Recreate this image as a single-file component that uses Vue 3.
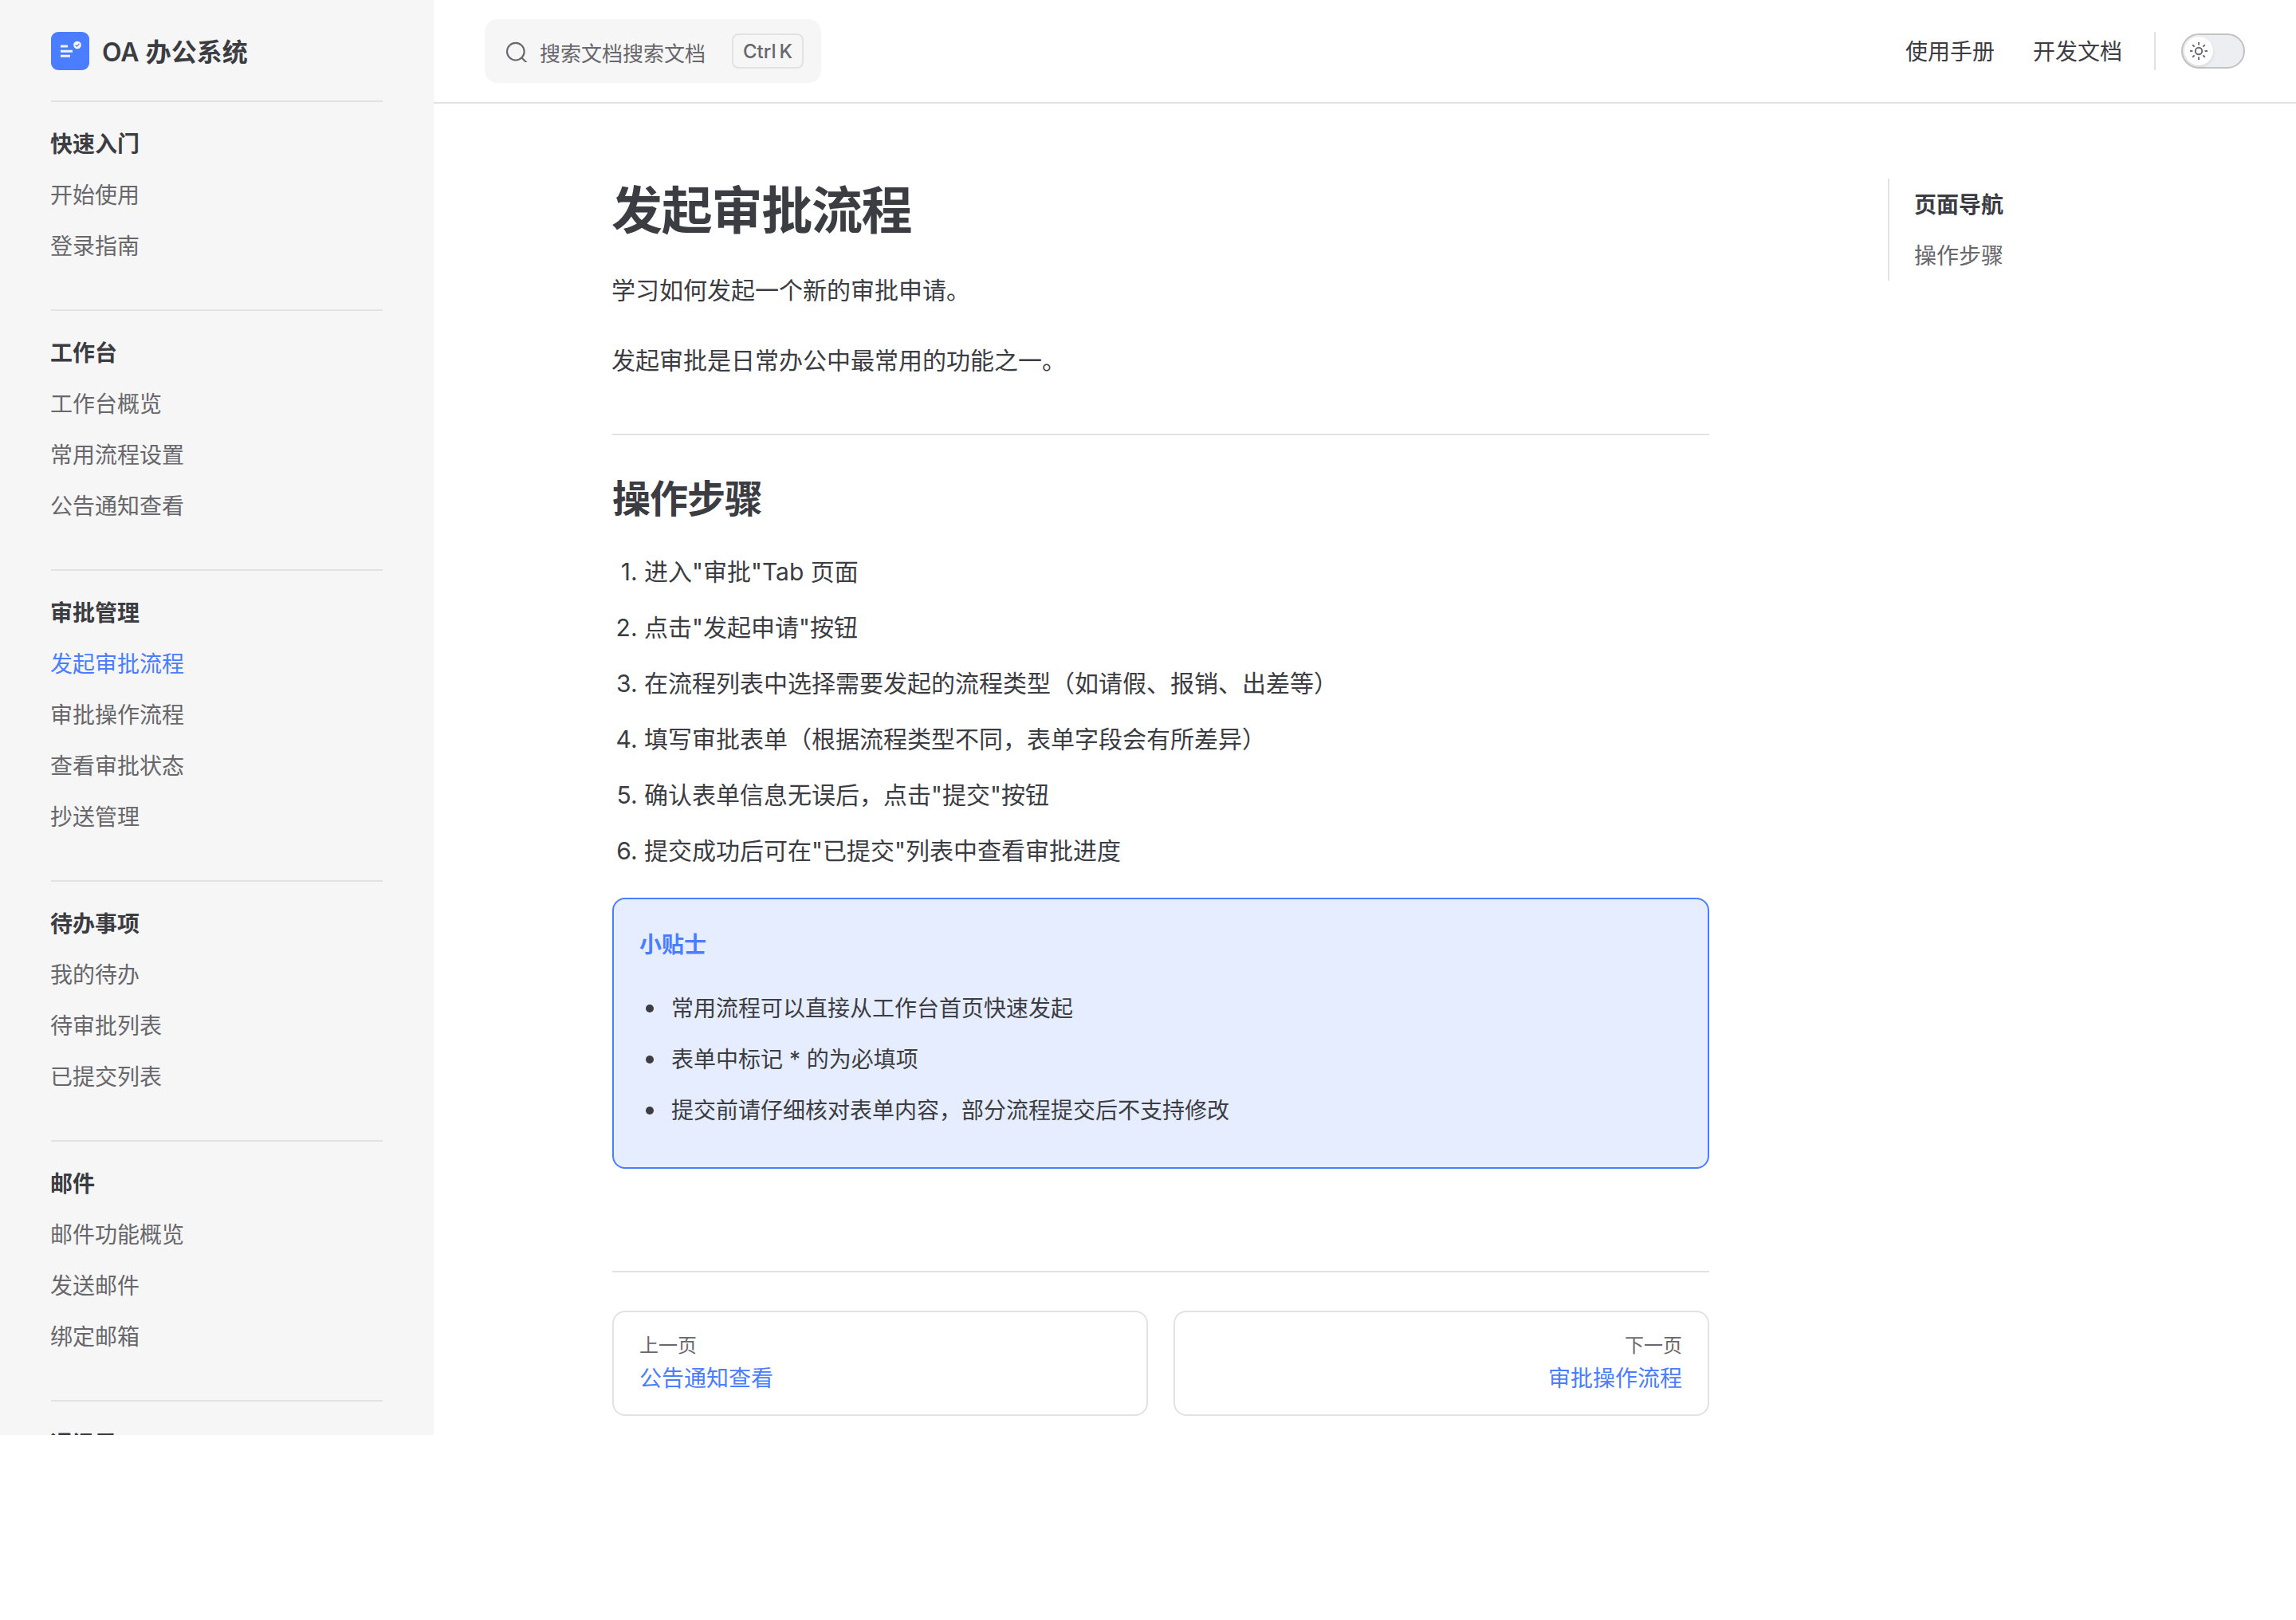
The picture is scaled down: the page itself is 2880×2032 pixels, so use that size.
<script setup>
const groups = [
  { title: '快速入门', items: ['开始使用', '登录指南'] },
  { title: '工作台', items: ['工作台概览', '常用流程设置', '公告通知查看'] },
  { title: '审批管理', items: ['发起审批流程', '审批操作流程', '查看审批状态', '抄送管理'] },
  { title: '待办事项', items: ['我的待办', '待审批列表', '已提交列表'] },
  { title: '邮件', items: ['邮件功能概览', '发送邮件', '绑定邮箱'] },
  { title: '通讯录', items: [] },
]
const active = '发起审批流程'
const steps = [
  '进入"审批"Tab 页面',
  '点击"发起申请"按钮',
  '在流程列表中选择需要发起的流程类型（如请假、报销、出差等）',
  '填写审批表单（根据流程类型不同，表单字段会有所差异）',
  '确认表单信息无误后，点击"提交"按钮',
  '提交成功后可在"已提交"列表中查看审批进度',
]
const tips = [
  '常用流程可以直接从工作台首页快速发起',
  '表单中标记 * 的为必填项',
  '提交前请仔细核对表单内容，部分流程提交后不支持修改',
]
const rays = [0, 45, 90, 135, 180, 225, 270, 315]
</script>

<template>
  <div class="layout">
    <aside class="sidebar">
      <div class="brand">
        <svg class="logo" viewBox="0 0 48 48">
          <rect width="48" height="48" rx="9" fill="#4a7dff" />
          <path d="M12 16.5h9v3h-9zM12 22.8h15v3H12zM12 28.8h12v3H12z" fill="#fff" opacity=".9" />
          <circle cx="33" cy="16.5" r="4.8" fill="#fff" opacity=".95" />
          <path d="M30.6 16.5l1.8 1.7 3-3.2" fill="none" stroke="#4a7dff" stroke-width="1.1" />
        </svg>
        <span>OA 办公系统</span>
      </div>
      <nav>
        <section v-for="g in groups" :key="g.title" class="group">
          <h2>{{ g.title }}</h2>
          <a v-for="i in g.items" :key="i" :class="{ active: i === active }">{{ i }}</a>
        </section>
      </nav>
    </aside>

    <div class="main">
      <header class="topbar">
        <div class="search">
          <svg class="glass" viewBox="0 -2 28 28" fill="none" stroke="#67676c" stroke-width="2.1">
            <circle cx="12.8" cy="12.7" r="10.8" />
            <path d="M20.4 20.4l6.2 6.2" />
          </svg>
          <span class="placeholder">搜索文档搜索文档</span>
          <span class="keys"><kbd>Ctrl</kbd><kbd>K</kbd></span>
        </div>
        <div class="links">
          <a>使用手册</a>
          <a>开发文档</a>
          <i class="sep"></i>
          <span class="switch">
            <span class="knob">
              <svg viewBox="0 0 24 24" fill="none" stroke="#67676c" stroke-width="1.9">
                <circle cx="12" cy="12" r="4.2" />
                <path v-for="r in rays" :key="r" d="M12 1v3.4" :transform="`rotate(${r} 12 12)`" />
              </svg>
            </span>
          </span>
        </div>
      </header>

      <div class="body">
        <main class="doc">
          <h1>发起审批流程</h1>
          <p>学习如何发起一个新的审批申请。</p>
          <p>发起审批是日常办公中最常用的功能之一。</p>
          <h2>操作步骤</h2>
          <ol>
            <li v-for="s in steps" :key="s">{{ s }}</li>
          </ol>
          <div class="tip">
            <p class="tip-title">小贴士</p>
            <ul>
              <li v-for="t in tips" :key="t">{{ t }}</li>
            </ul>
          </div>
          <footer class="pager">
            <a class="card">
              <span class="desc">上一页</span>
              <span class="name">公告通知查看</span>
            </a>
            <a class="card next">
              <span class="desc">下一页</span>
              <span class="name">审批操作流程</span>
            </a>
          </footer>
        </main>
        <aside class="outline">
          <div class="outline-title">页面导航</div>
          <a>操作步骤</a>
        </aside>
      </div>
    </div>
  </div>
</template>

<style>
body {
  margin: 0;
  background: #fff;
}
</style>

<style scoped>
.layout {
  display: flex;
  width: 2880px;
  height: 1800px;
  overflow: hidden;
  font-family: Inter, "Noto Sans CJK SC", sans-serif;
  font-size: 28px;
  color: #3c3c43;
  font-synthesis: none;
}
h1, h2, p, ol, ul {
  margin: 0;
}
.sidebar {
  flex: none;
  box-sizing: border-box;
  width: 544px;
  height: 1800px;
  padding: 0 64px;
  overflow: hidden;
  background: #f6f6f7;
}
.brand {
  display: flex;
  align-items: center;
  gap: 16px;
  box-sizing: border-box;
  height: 128px;
  border-bottom: 2px solid #e2e2e3;
  padding-top: 2px;
  font-size: 32px;
  font-weight: 600;
}
.brand span {
  margin-bottom: 2px;
}
.logo {
  width: 48px;
  height: 48px;
}
.group {
  padding: 20px 0 48px;
}
.group + .group {
  border-top: 2px solid #e2e2e3;
}
.group h2,
.group a {
  display: block;
  height: 64px;
  margin-left: -1px;
  line-height: 66px;
  font-size: 28px;
}
.group h2 {
  font-weight: 700;
}
.group a {
  color: #67676c;
}
.group a.active {
  color: #4a7dff;
}
.main {
  flex: 1;
}
.topbar {
  display: flex;
  align-items: center;
  justify-content: space-between;
  height: 128px;
  padding: 0 64px;
  border-bottom: 2px solid #e2e2e3;
}
.search {
  display: flex;
  align-items: center;
  box-sizing: border-box;
  width: 422px;
  height: 80px;
  padding: 0 22px 0 26px;
  border-radius: 16px;
  background: #f6f6f7;
  color: #67676c;
}
.glass {
  width: 28px;
  height: 28px;
  margin-right: 15px;
}
.placeholder {
  flex: 1;
  padding-top: 2px;
  font-size: 26px;
}
.keys {
  display: flex;
  align-items: center;
  justify-content: center;
  gap: 4px;
  box-sizing: border-box;
  width: 90px;
  height: 44px;
  padding-top: 1px;
  border: 2px solid #e2e2e3;
  border-radius: 8px;
}
kbd {
  font-family: Inter, sans-serif;
  font-size: 24px;
  font-weight: 500;
}
.links {
  display: flex;
  align-items: center;
}
.links a {
  height: 48px;
  margin-right: 48px;
  line-height: 50px;
}
.sep {
  width: 2px;
  height: 48px;
  margin: 0 32px 0 -8px;
  background: #e2e2e3;
}
.switch {
  box-sizing: border-box;
  width: 80px;
  height: 44px;
  padding: 2px;
  border: 2px solid #c2c2c4;
  border-radius: 22px;
  background: #edeef2;
}
.knob {
  display: flex;
  align-items: center;
  justify-content: center;
  width: 36px;
  height: 36px;
  border-radius: 50%;
  background: #fff;
  box-shadow: 0 2px 4px rgba(0, 0, 0, 0.04), 0 2px 4px rgba(0, 0, 0, 0.06);
}
.knob svg {
  width: 24px;
  height: 24px;
}
.body {
  display: flex;
  gap: 224px;
  padding: 94px 0 0 224px;
}
.doc {
  width: 1376px;
  font-size: 30px;
}
h1 {
  margin-left: -1px;
  font-size: 64px;
  line-height: 80px;
  font-weight: 700;
  letter-spacing: -0.02em;
}
.doc > p {
  margin: 32px 0 0 -1px;
  line-height: 56px;
}
.doc h2 {
  margin-top: 64px;
  padding-top: 48px;
  border-top: 2px solid #e2e2e3;
  font-size: 48px;
  line-height: 64px;
  font-weight: 700;
  letter-spacing: -0.02em;
}
ol,
ul {
  margin: 32px 0;
  padding-left: 40px;
}
li {
  line-height: 54px;
}
li + li {
  margin-top: 16px;
}
ol li::marker {
  font-variant-numeric: normal;
}
.tip {
  box-sizing: border-box;
  height: 340px;
  padding: 33px 32px 0;
  border: 2px solid #4a7dff;
  border-radius: 16px;
  background: #e6edff;
  font-size: 28px;
}
.tip-title {
  line-height: 48px;
  font-weight: 700;
  color: #4a7dff;
}
.tip ul {
  list-style: none;
}
.tip li {
  position: relative;
  line-height: 48px;
}
.tip li::before {
  content: "";
  position: absolute;
  top: 19px;
  left: -32px;
  width: 10px;
  height: 10px;
  border-radius: 50%;
  background: #3c3c43;
}
.pager {
  display: grid;
  grid-template-columns: 1fr 1fr;
  gap: 32px;
  margin-top: 128px;
  padding-top: 48px;
  border-top: 2px solid #e2e2e3;
}
.card {
  display: flex;
  flex-direction: column;
  padding: 22px 32px 26px;
  border: 2px solid #e2e2e3;
  border-radius: 16px;
  line-height: 40px;
}
.next {
  text-align: right;
}
.desc {
  font-size: 24px;
  color: #67676c;
}
.name {
  height: 40px;
  line-height: 42px;
  font-size: 28px;
  color: #4a7dff;
}
.outline {
  align-self: flex-start;
  height: 128px;
  border-left: 2px solid #e2e2e3;
  padding-left: 31px;
}
.outline-title {
  height: 64px;
  line-height: 66px;
  font-weight: 700;
}
.outline a {
  display: block;
  height: 64px;
  line-height: 66px;
  color: #67676c;
}
</style>
